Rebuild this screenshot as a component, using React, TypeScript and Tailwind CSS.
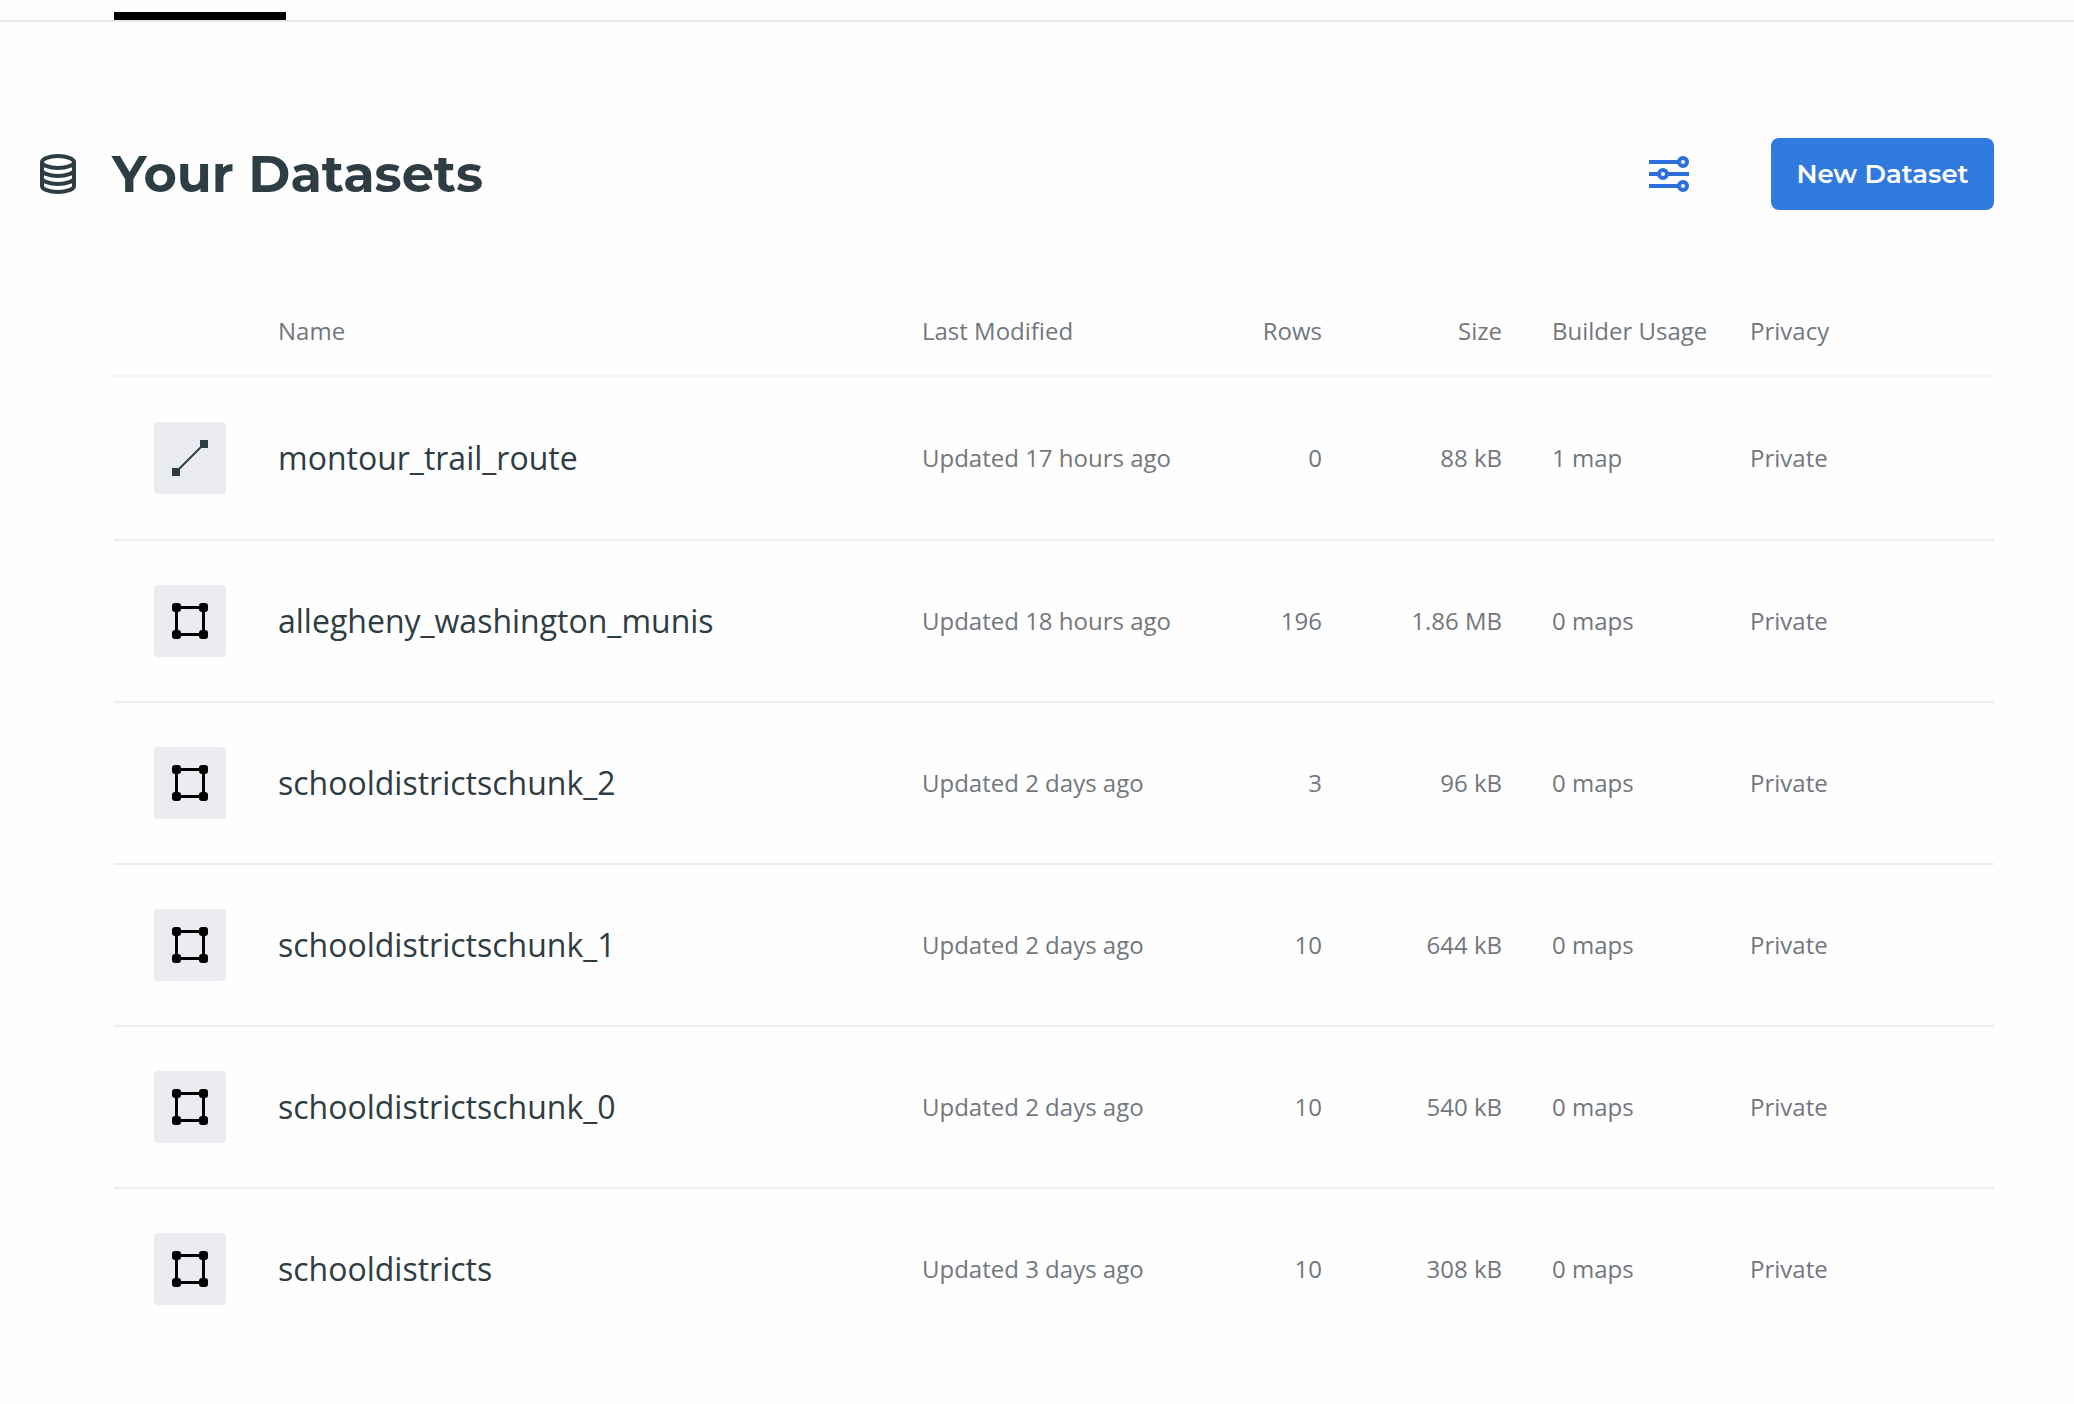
import React from "react";

type Geometry = "line" | "polygon";

interface Dataset {
  name: string;
  geometry: Geometry;
  modified: string;
  rows: string;
  size: string;
  usage: string;
  privacy: string;
}

const datasets: Dataset[] = [
  { name: "montour_trail_route", geometry: "line", modified: "Updated 17 hours ago", rows: "0", size: "88 kB", usage: "1 map", privacy: "Private" },
  { name: "allegheny_washington_munis", geometry: "polygon", modified: "Updated 18 hours ago", rows: "196", size: "1.86 MB", usage: "0 maps", privacy: "Private" },
  { name: "schooldistrictschunk_2", geometry: "polygon", modified: "Updated 2 days ago", rows: "3", size: "96 kB", usage: "0 maps", privacy: "Private" },
  { name: "schooldistrictschunk_1", geometry: "polygon", modified: "Updated 2 days ago", rows: "10", size: "644 kB", usage: "0 maps", privacy: "Private" },
  { name: "schooldistrictschunk_0", geometry: "polygon", modified: "Updated 2 days ago", rows: "10", size: "540 kB", usage: "0 maps", privacy: "Private" },
  { name: "schooldistricts", geometry: "polygon", modified: "Updated 3 days ago", rows: "10", size: "308 kB", usage: "0 maps", privacy: "Private" },
];

function DatabaseIcon() {
  return (
    <svg width="36" height="40" viewBox="0 0 36 40" fill="none" stroke="currentColor" strokeWidth="4" aria-hidden="true">
      <ellipse cx="18" cy="8" rx="16" ry="6" />
      <path d="M2 8v24c0 3.3 7.2 6 16 6s16-2.7 16-6V8" />
      <path d="M2 16c0 3.3 7.2 6 16 6s16-2.7 16-6" />
      <path d="M2 24c0 3.3 7.2 6 16 6s16-2.7 16-6" />
    </svg>
  );
}

function SlidersIcon() {
  return (
    <svg width="40" height="36" viewBox="0 0 40 36" fill="none" stroke="currentColor" strokeWidth="4" aria-hidden="true">
      <path d="M0 6h30M0 18h10M18 18h22M0 30h30" />
      <circle cx="34" cy="6" r="4" />
      <circle cx="14" cy="18" r="4" />
      <circle cx="34" cy="30" r="4" />
    </svg>
  );
}

function GeometryIcon({ geometry }: { geometry: Geometry }) {
  if (geometry === "line") {
    return (
      <svg width="36" height="36" viewBox="0 0 36 36" className="text-[#2e3c43]" aria-hidden="true">
        <path d="M5 31L31 5" stroke="currentColor" strokeWidth="2" />
        <path d="M0 28h8v8H0zM28 0h8v8h-8z" fill="currentColor" />
      </svg>
    );
  }
  return (
    <svg width="36" height="36" viewBox="0 0 36 36" className="text-black" fill="currentColor" aria-hidden="true">
      <rect x="4.5" y="4.5" width="27" height="27" fill="none" stroke="currentColor" strokeWidth="3" />
      <rect x="0" y="0" width="9" height="9" rx="3" />
      <rect x="27" y="0" width="9" height="9" rx="3" />
      <rect x="0" y="27" width="9" height="9" rx="3" />
      <rect x="27" y="27" width="9" height="9" rx="3" />
    </svg>
  );
}

export default function App() {
  return (
    <div className="min-h-screen bg-[#fefefe] font-['Open_Sans',sans-serif] text-[#2e3c43]">
      <nav className="border-b-2 border-[#e8e8ed] pt-3 pl-[114px]">
        <div className="h-2 w-[172px] bg-black" />
      </nav>

      <main className="pt-[116px] pr-20 pb-16">
        <header className="flex h-[72px] items-center pl-10">
          <DatabaseIcon />
          <h1 className="ml-9 flex-1 font-['Montserrat','Inter',sans-serif] text-[51px] font-bold">Your Datasets</h1>
          <button type="button" aria-label="Filter datasets" className="mr-[82px] text-[#2c6fdb]">
            <SlidersIcon />
          </button>
          <button type="button" className="h-[72px] w-[223px] rounded-lg bg-[#307ade] font-['Montserrat','Inter',sans-serif] text-[26px] font-semibold text-white">
            New Dataset
          </button>
        </header>

        <div className="mt-[76px] pl-[114px]">
          <table className="w-full table-fixed text-left text-2xl text-[#72777d]">
            <colgroup>
              <col className="w-[164px]" />
              <col />
              <col className="w-[280px]" />
              <col className="w-[120px]" />
              <col className="w-[180px]" />
              <col className="w-[248px]" />
              <col className="w-[244px]" />
            </colgroup>
            <thead>
              <tr className="h-[90px] border-b-2 border-[#f0f4fa]">
                <td />
                <th scope="col" className="font-normal">Name</th>
                <th scope="col" className="font-normal">Last Modified</th>
                <th scope="col" className="text-right font-normal">Rows</th>
                <th scope="col" className="text-right font-normal">Size</th>
                <th scope="col" className="pl-[50px] font-normal">Builder Usage</th>
                <th scope="col" className="font-normal">Privacy</th>
              </tr>
            </thead>
            <tbody>
              {datasets.map((d) => (
                <tr key={d.name} className="h-[162px] border-b-2 border-[#ebecf4] first:h-[164px] last:border-transparent">
                  <td className="pl-10">
                    <div className="flex size-[72px] items-center justify-center rounded bg-[#ebecf2]">
                      <GeometryIcon geometry={d.geometry} />
                    </div>
                  </td>
                  <td className="truncate text-[32px] text-[#2e3c43]">{d.name}</td>
                  <td className="whitespace-nowrap">{d.modified}</td>
                  <td className="text-right">{d.rows}</td>
                  <td className="text-right">{d.size}</td>
                  <td className="pl-[50px]">{d.usage}</td>
                  <td>{d.privacy}</td>
                </tr>
              ))}
            </tbody>
          </table>
        </div>
      </main>
    </div>
  );
}
